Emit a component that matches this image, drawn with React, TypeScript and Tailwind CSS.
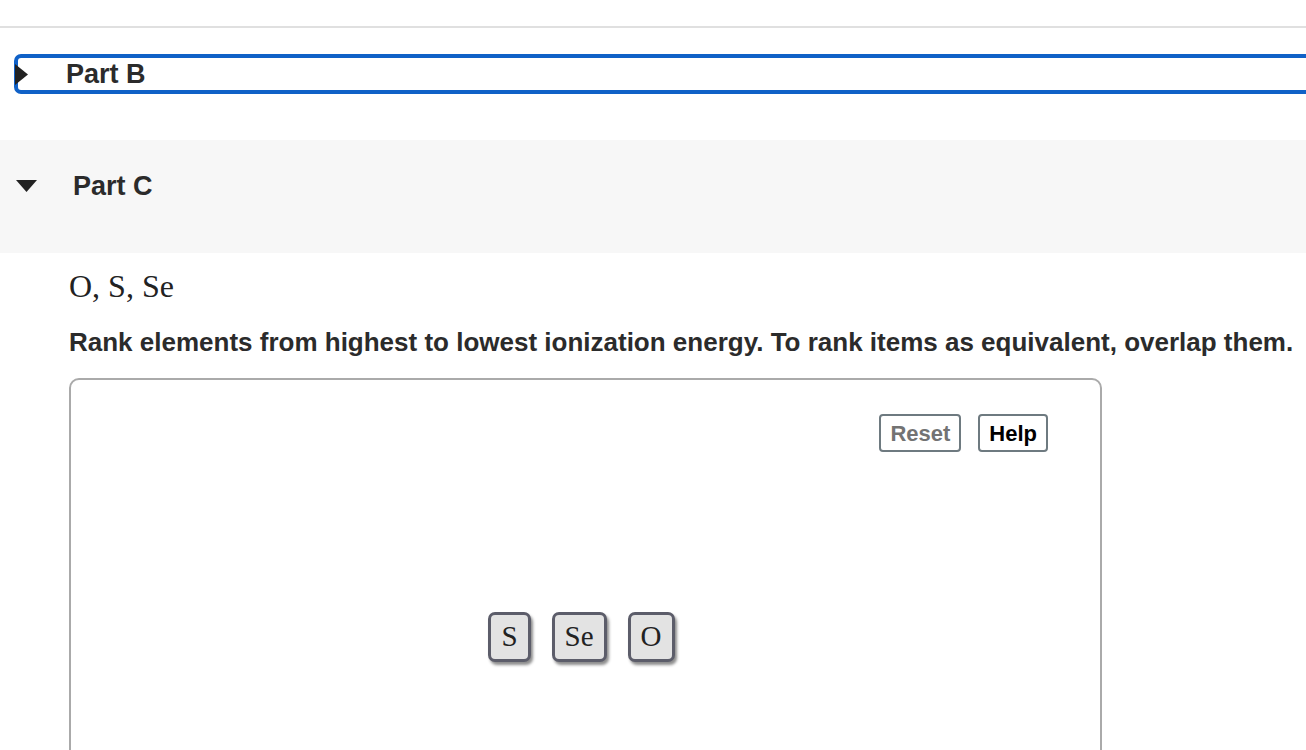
import React from 'react';

const sans = { fontFamily: '"Liberation Sans", Arial, sans-serif' };
const serif = { fontFamily: '"Liberation Serif", "Times New Roman", serif' };

const Tile = ({ label }: { label: string }) => (
  <div
    className="h-[50px] px-[10px] flex items-center justify-center rounded-[7px] border-[3px] border-[#5c5d6a] bg-[#e3e3e3] text-[29px] text-[#222] shadow-[2px_3px_3px_rgba(0,0,0,0.45)]"
    style={serif}
  >
    {label}
  </div>
);

const App = () => {
  return (
    <div className="w-[1306px] h-[750px] overflow-hidden bg-white text-[#2b2b2b]" style={sans}>
      <div className="h-[26px]" />
      <div className="border-t-2 border-[#e0e0e0]" />

      {/* Part B (collapsed, focused) */}
      <div className="mt-[26px] ml-[14px] mr-[-20px] h-[40px] border-[4px] border-[#1061c7] rounded-[7px] flex items-center">
        <svg width="14" height="21" viewBox="0 0 14 21" className="ml-[-3px] relative">
          <path d="M0 0 L13 10.5 L0 21 Z" fill="#222" />
        </svg>
        <span className="ml-[37px] text-[27px] font-bold leading-none">Part B</span>
      </div>

      {/* Part C (expanded) */}
      <div className="mt-[46px] h-[113px] bg-[#f7f7f7] flex items-start pt-[30px]">
        <svg width="21" height="12" viewBox="0 0 21 12" className="ml-[16px] mt-[10px]">
          <path d="M0 0 L21 0 L10.5 12 Z" fill="#222" />
        </svg>
        <span className="ml-[36px] text-[27px] font-bold leading-[32px]">Part C</span>
      </div>

      <div className="pl-[69px]">
        <p className="mt-[14px] text-[32px] leading-[38px] text-[#222]" style={serif}>
          O, S, Se
        </p>
        <p className="mt-[22px] text-[26px] leading-[30px] font-bold whitespace-nowrap">
          Rank elements from highest to lowest ionization energy. To rank items as equivalent, overlap them.
        </p>

        <div className="mt-[21px] w-[1033px] h-[420px] border-2 border-[#aaaaaa] rounded-[10px] flex flex-col">
          <div className="pt-[34px] pr-[52px] flex justify-end gap-[17px]">
            <button className="h-[38px] px-[9px] border-2 border-[#6e7a80] rounded-[4px] text-[22px] font-bold text-[#737373]">
              Reset
            </button>
            <button className="h-[38px] px-[9px] border-2 border-[#6e7a80] rounded-[4px] text-[22px] font-bold text-black">
              Help
            </button>
          </div>
          <div className="mt-[160px] pr-[8px] flex justify-center gap-[21px]">
            <Tile label="S" />
            <Tile label="Se" />
            <Tile label="O" />
          </div>
        </div>
      </div>
    </div>
  );
};

export default App;
